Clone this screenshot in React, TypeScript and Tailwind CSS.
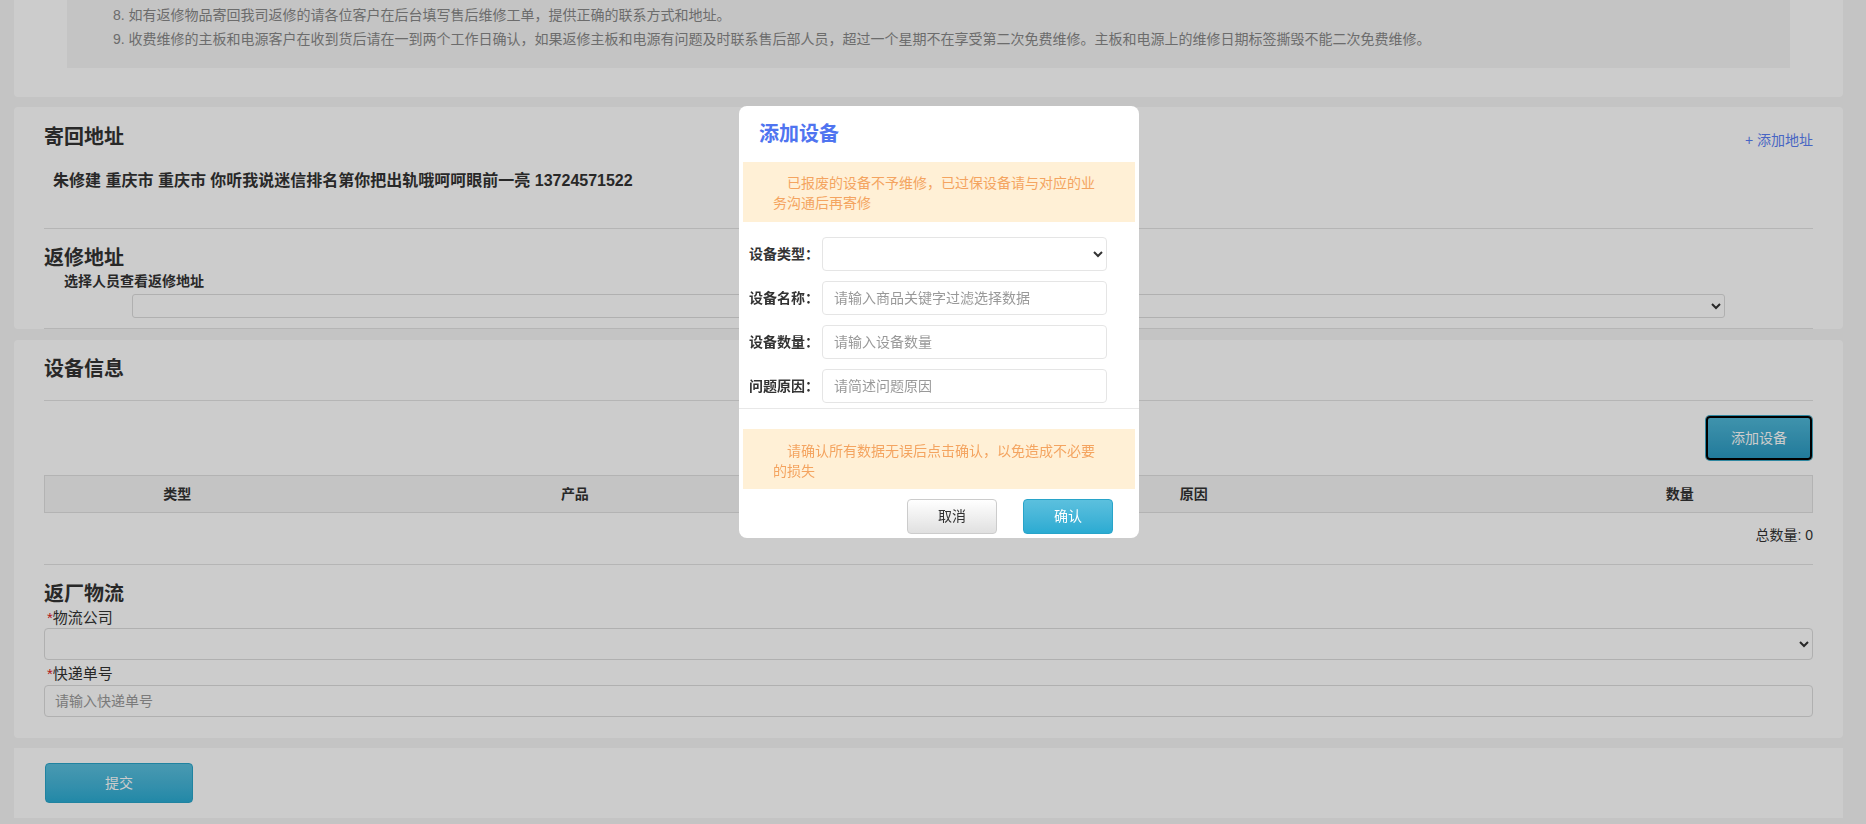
import React from "react";

const notes = [
  "8. 如有返修物品寄回我司返修的请各位客户在后台填写售后维修工单，提供正确的联系方式和地址。",
  "9. 收费维修的主板和电源客户在收到货后请在一到两个工作日确认，如果返修主板和电源有问题及时联系售后部人员，超过一个星期不在享受第二次免费维修。主板和电源上的维修日期标签撕毁不能二次免费维修。",
];

const rows = [
  { label: "设备类型：", kind: "select", placeholder: "" },
  { label: "设备名称：", kind: "input", placeholder: "请输入商品关键字过滤选择数据" },
  { label: "设备数量：", kind: "input", placeholder: "请输入设备数量" },
  { label: "问题原因：", kind: "input", placeholder: "请简述问题原因" },
];

function Divider({ className = "" }: { className?: string }) {
  return <div className={"h-px bg-[#e3e3e3] " + className} />;
}

function AddDeviceModal() {
  return (
    <div className="fixed left-[739px] top-[106px] w-[400px] h-[432px] bg-white rounded-[8px] flex flex-col">
      <div className="h-[56px] pl-[20px] flex items-center text-[20px] font-bold text-[#4f74f0]">添加设备</div>
      <div className="mx-[4px] h-[60px] bg-[#fff0d6] text-[#f4a460] text-[14px] leading-[20px] px-[30px] pt-[11px] indent-[14px]">
        已报废的设备不予维修，已过保设备请与对应的业务沟通后再寄修
      </div>
      <div className="flex flex-col gap-[10px] pt-[15px] pb-[5px] pl-[10px] border-b border-[#e8e8e8]">
        {rows.map((r) => (
          <div key={r.label} className="flex items-center h-[34px]">
            <label className="w-[73px] text-[14px] font-bold text-[#333]">{r.label}</label>
            {r.kind === "select" ? (
              <select className="w-[285px] h-[34px] bg-white border border-[#e5e5e5] rounded-[4px] px-[8px] text-[14px] text-[#333]">
                <option></option>
              </select>
            ) : (
              <input
                className="w-[285px] h-[34px] bg-white border border-[#e5e5e5] rounded-[4px] px-[11px] text-[14px] text-[#333] placeholder:text-[#999]"
                placeholder={r.placeholder}
              />
            )}
          </div>
        ))}
      </div>
      <div className="mx-[4px] mt-[20px] h-[60px] bg-[#fff0d6] text-[#f4a460] text-[14px] leading-[20px] px-[30px] pt-[12px] indent-[14px]">
        请确认所有数据无误后点击确认，以免造成不必要的损失
      </div>
      <div className="mt-[10px] flex justify-end gap-[26px] pr-[26px]">
        <button className="w-[90px] h-[35px] rounded-[4px] border border-[#ccc] bg-gradient-to-b from-white to-[#e0e0e0] text-[14px] text-[#333]">取消</button>
        <button className="w-[90px] h-[35px] rounded-[4px] border border-[#28a4c9] bg-gradient-to-b from-[#5bc0de] to-[#2aabd2] text-[14px] text-white">确认</button>
      </div>
    </div>
  );
}

export default function App() {
  return (
    <div className="relative h-[824px] overflow-hidden bg-[#f5f5f5] text-[#333] font-['Liberation_Sans','Noto_Sans_CJK_SC',sans-serif]">
      <div className="ml-[14px] w-[1829px] flex flex-col">
        {/* notes card, scrolled */}
        <div className="bg-white rounded-b-[4px] px-[53px] pb-[29px]">
          <div className="bg-[#f5f5f5] pl-[46px] pt-[3px] pb-[17px] text-[14px] leading-[24px] text-[#888]">
            {notes.map((n) => (
              <p key={n}>{n}</p>
            ))}
          </div>
        </div>

        {/* return address */}
        <div className="mt-[10px] bg-white rounded-[4px] px-[30px] pt-[16px]">
          <div className="flex justify-between items-center h-[28px]">
            <h2 className="text-[20px] font-bold leading-[28px]">寄回地址</h2>
            <a className="text-[14px] text-[#5b7ff5] mt-[6px]">+ 添加地址</a>
          </div>
          <div className="mt-[19px] pl-[9px] text-[16px] font-bold leading-[22px]">
            朱修建 重庆市 重庆市 你听我说迷信排名第你把出轨哦呵呵眼前一亮 13724571522
          </div>
          <Divider className="mt-[36px]" />
          <h2 className="mt-[16px] text-[20px] font-bold leading-[26px]">返修地址</h2>
          <div className="pl-[20px] text-[14px] font-bold leading-[20px]">选择人员查看返修地址</div>
          <div className="mt-[3px] px-[88px]">
            <select className="w-full h-[24px] bg-white border border-[#ddd] rounded-[3px] text-[14px]">
              <option></option>
            </select>
          </div>
          <Divider className="mt-[10px]" />
        </div>

        {/* device info */}
        <div className="mt-[11px] bg-white rounded-[4px] px-[30px] pt-[15px] pb-[21px]">
          <h2 className="text-[20px] font-bold leading-[28px]">设备信息</h2>
          <Divider className="mt-[17px]" />
          <div className="mt-[15px] flex justify-end pr-[1px]">
            <button className="w-[106px] h-[44px] rounded-[4px] border-2 border-black ring-1 ring-[#3aa9c8] bg-gradient-to-b from-[#4fb8d8] to-[#2a9ac2] text-[14px] text-white">
              添加设备
            </button>
          </div>
          <table className="mt-[15px] w-full border border-[#e0e0e0] text-[14px] font-bold">
            <thead>
              <tr className="h-[37px] bg-[#f5f5f5]">
                <th className="w-[15%] font-bold">类型</th>
                <th className="w-[30%] font-bold">产品</th>
                <th className="w-[40%] font-bold">原因</th>
                <th className="w-[15%] font-bold">数量</th>
              </tr>
            </thead>
          </table>
          <div className="mt-[12px] text-right text-[14px] leading-[20px]">总数量: 0</div>
          <Divider className="mt-[19px]" />
          <h2 className="mt-[15px] text-[20px] font-bold leading-[28px]">返厂物流</h2>
          <div className="pl-[3px] text-[15px] leading-[20px]">
            <span className="text-[#e02020]">*</span>物流公司
          </div>
          <select className="w-full h-[32px] bg-white border border-[#ddd] rounded-[4px] text-[14px]">
            <option></option>
          </select>
          <div className="mt-[4px] pl-[3px] text-[15px] leading-[20px]">
            <span className="text-[#e02020]">*</span>快递单号
          </div>
          <input
            className="mt-[1px] w-full h-[32px] bg-white border border-[#ddd] rounded-[4px] px-[10px] text-[14px] placeholder:text-[#999]"
            placeholder="请输入快递单号"
          />
        </div>

        {/* submit */}
        <div className="mt-[10px] bg-white px-[31px] py-[15px]">
          <button className="w-[148px] h-[40px] rounded-[4px] border border-[#28a4c9] bg-gradient-to-b from-[#5bc0de] to-[#2aabd2] text-[14px] text-white">
            提交
          </button>
        </div>
      </div>

      <div className="fixed inset-0 bg-black/20" />
      <AddDeviceModal />
    </div>
  );
}
